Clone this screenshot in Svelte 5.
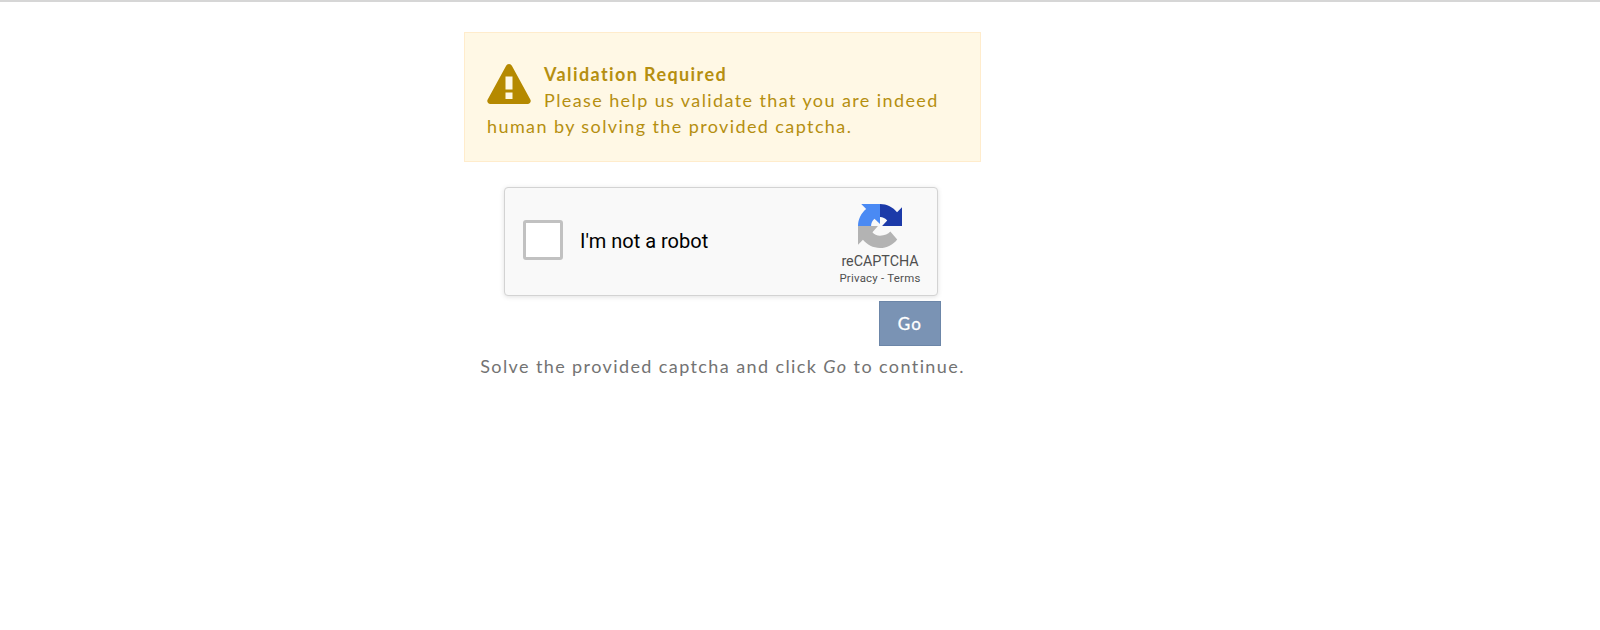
<script>
  const title = 'Validation Required';
</script>

<div class="page">
  <main class="col">
    <div class="alert">
      <svg class="warn" viewBox="0 0 44 40" aria-hidden="true">
        <path fill-rule="evenodd" fill="#b58900" d="M22 0c1.400 0 2.400.8 3 1.900l18.300 33.600c1.200 2.200-.2 4.500-2.700 4.500H3.400C.9 40-.5 37.700.7 35.500L19 1.900C19.600.8 20.600 0 22 0ZM18.500 12.500v13h7v-13ZM18.500 28.500v6.500h7v-6.500Z"/>
      </svg>
      <strong>{title}</strong><br />
      Please help us validate that you are indeed human by solving the provided captcha.
    </div>

    <div class="captcha">
      <span class="check"></span>
      <span class="label">I'm not a robot</span>
      <div class="brand">
        <svg class="logo" viewBox="0 0 64 64" aria-hidden="true">
          <path fill="#1c3aa9" d="M64 32V4.700l-7.200 7.200C51 4.700 42 0 32 0v19c4 0 8 1.800 10.500 5l-7.500 8Z"/>
          <path fill="#4a8af4" d="M32 0H4.700l7.200 7.200C4.700 13 0 22 0 32h19c0-4 1.800-8 5-10.500l8 7.500Z"/>
          <path fill="#b3b3b3" d="M0 32v27.300l7.200-7.200C13 59.300 22 64 32 64c10 0 19-4.700 25-12.500L47 40C44 44 38.500 46 32 46c-4.500 0-8.500-2-11-5l8-9Z"/>
        </svg>
        <span class="rc">reCAPTCHA</span>
        <span class="links">Privacy - Terms</span>
      </div>
    </div>

    <div class="actions">
      <button type="button">Go</button>
    </div>

    <p class="hint">Solve the provided captcha and click <em>Go</em> to continue.</p>
  </main>
</div>

<style>
  :global(body) {
    margin: 0;
    background: #fff;
  }
  .page {
    height: 630px;
    box-sizing: border-box;
    border-top: 2px solid #d6d6d6;
    padding: 30px 0 0 464px;
    font-family: Lato, "Noto Sans", sans-serif;
    overflow: hidden;
  }
  .col {
    width: 517px;
    display: flex;
    flex-direction: column;
  }
  .alert {
    box-sizing: border-box;
    height: 130px;
    padding: 28px 22px 0;
    background: #fff8e5;
    border: 1px solid #ffeccc;
    color: #b58f10;
    font-size: 18px;
    line-height: 26px;
    letter-spacing: 1.4px;
  }
  .warn {
    float: left;
    width: 44px;
    height: 40px;
    margin: 3px 13px 0 0;
  }
  strong {
    font-weight: 700;
  }
  .captcha {
    box-sizing: border-box;
    width: 434px;
    height: 109px;
    margin: 25px 0 0 40px;
    background: #f9f9f9;
    border: 1px solid #d3d3d3;
    border-radius: 4px;
    box-shadow: 0 1px 5px rgba(0, 0, 0, 0.12);
    display: flex;
    align-items: center;
    font-family: Roboto, sans-serif;
  }
  .check {
    box-sizing: border-box;
    width: 40px;
    height: 40px;
    margin: 0 0 4px 18px;
    background: #fff;
    border: 3px solid #c1c1c1;
    border-radius: 3px;
  }
  .label {
    margin: 0 0 2px 17px;
    font-size: 20px;
    color: #000;
  }
  .brand {
    align-self: flex-start;
    margin-left: auto;
    width: 96px;
    margin-right: 9px;
    padding-top: 16px;
    display: flex;
    flex-direction: column;
    align-items: center;
    color: #4f4f4f;
  }
  .logo {
    width: 44px;
    height: 44px;
    margin-bottom: 5px;
  }
  .rc {
    font-size: 14.300px;
    line-height: 17px;
  }
  .links {
    font-size: 11.400px;
    line-height: 16px;
    letter-spacing: 0.25px;
  }
  .actions {
    display: flex;
    justify-content: flex-end;
    width: 477px;
    margin-top: 5px;
  }
  button {
    width: 62px;
    height: 45px;
    background: #7a93b4;
    border: 1px solid #6c86a8;
    color: #fff;
    font: 400 17px Lato, sans-serif;
    letter-spacing: 1.200px;
    -webkit-text-stroke: 0.3px #fff;
    padding: 0;
  }
  .hint {
    margin: 7px 0 0;
    text-align: center;
    color: #737373;
    font-size: 18px;
    line-height: 26px;
    letter-spacing: 1.4px;
  }
</style>
